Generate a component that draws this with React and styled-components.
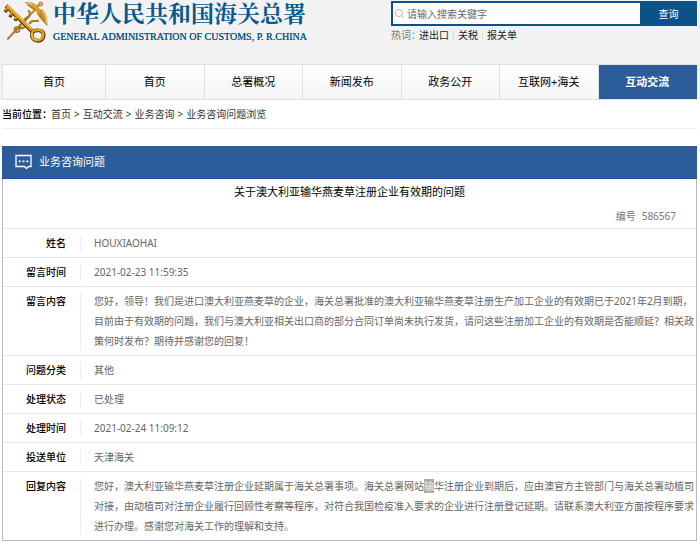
import { Fragment } from "react";
import styled, { createGlobalStyle } from "styled-components";

const GlobalStyle = createGlobalStyle`
  * {
    box-sizing: border-box;
  }

  body {
    margin: 0;
    background: #fff;
    color: #000;
    font-family: "Noto Sans", "Noto Sans CJK SC", sans-serif;
    font-size: 10px;
    line-height: 20px;
  }

  a {
    color: inherit;
    text-decoration: none;
  }
`;

const Header = styled.header`
  padding: 0 3px 0 2px;
  background: #f2f2f2;
`;

const HeaderTop = styled.div`
  display: flex;
  justify-content: space-between;
  align-items: flex-start;
  min-height: 64px;
`;

const Brand = styled.a`
  display: flex;
  gap: 4px;
  color: #07598e;
`;

const BrandText = styled.div`
  white-space: nowrap;
`;

const BrandName = styled.h1`
  margin: 0;
  font-family: "Noto Serif CJK SC", "Noto Sans CJK SC", serif;
  font-size: 23px;
  line-height: 26px;
  font-weight: 700;
`;

const BrandSub = styled.p`
  margin: 0;
  font-family: "Liberation Serif", serif;
  font-size: 10px;
  line-height: 22px;
  font-weight: 400;
  text-shadow: 0 0 0 currentColor;
`;

const SearchArea = styled.div`
  width: 306px;
  padding-top: 1px;
`;

const SearchForm = styled.form`
  display: flex;
  height: 25px;
  border: 1px solid #0b5288;
  border-width: 2px 0 2px 2px;
  background: #0b5288;
`;

const SearchLabel = styled.label`
  flex: 1;
  display: flex;
  align-items: center;
  gap: 2px;
  padding-left: 1px;
  background: #fff;
`;

const SearchInput = styled.input`
  flex: 1;
  min-width: 0;
  padding: 0;
  border: 0;
  outline: 0;
  background: transparent;
  font: inherit;

  &::placeholder {
    color: #666;
    opacity: 1;
  }
`;

const SearchButton = styled.button`
  width: 57px;
  padding: 0;
  border: 0;
  background: #0b5288;
  color: #fff;
  font: inherit;
`;

const HotWords = styled.div`
  display: flex;
  align-items: center;
  line-height: 18px;
  color: #777;
`;

const HotLabel = styled.span`
  width: 24px;
  white-space: nowrap;
`;

const HotLink = styled.a`
  padding: 0 4px;
  line-height: 10px;
  color: #222;

  & + & {
    border-left: 1px solid #ddd;
  }
`;

const Nav = styled.nav`
  display: grid;
  grid-template-columns: 103px repeat(6, 1fr);
  border: 1px solid #e0e0e0;
  border-right: 0;
`;

const NavLink = styled.a`
  border-right: 1px solid ${({ $active }) => ($active ? "#2d5c9a" : "#e0e0e0")};
  background: ${({ $active }) =>
    $active ? "#2d5c9a" : "linear-gradient(#fefefe, #f5f5f5)"};
  color: ${({ $active }) => ($active ? "#fff" : "#000")};
  font-size: 11px;
  line-height: 34px;
  font-weight: ${({ $active }) => ($active ? 700 : 400)};
  text-align: center;
`;

const Main = styled.main`
  padding: 0 3px 0 2px;
`;

const Breadcrumb = styled.div`
  display: flex;
  gap: 3px;
  padding: 4px 0;
  border-bottom: 1px solid #eee;
  color: #333;
`;

const BreadcrumbLabel = styled.span`
  margin-right: -4px;
  color: #000;
  font-weight: 500;
`;

const Panel = styled.section`
  margin-top: 17px;
`;

const PanelHeader = styled.h2`
  display: flex;
  align-items: center;
  gap: 7px;
  margin: 0;
  padding: 0 13px;
  border-bottom: 1px solid #1f4f92;
  background: #2d5c9a;
  color: #fff;
  font-size: 11px;
  line-height: 32px;
  font-weight: 400;
`;

const PanelBody = styled.div`
  border: 1px solid #bbb;
  border-top: 0;
`;

const Title = styled.h3`
  margin: 0;
  padding-top: 2px;
  font-size: 11px;
  line-height: 22px;
  font-weight: 400;
  text-align: center;
`;

const Serial = styled.p`
  display: flex;
  justify-content: flex-end;
  gap: 6px;
  margin: 0;
  padding: 3px 20px 2px;
  color: #777;
`;

const Details = styled.table`
  width: 100%;
  border-collapse: collapse;
`;

const Row = styled.tr`
  border-top: 1px solid #e8e8e8;
`;

const Name = styled.th`
  width: 77px;
  padding: 4px 14px 4px 0;
  font-weight: 500;
  text-align: right;
  vertical-align: top;
  white-space: nowrap;
`;

const Value = styled.td`
  padding: 4px 0 4px 14px;
  background: linear-gradient(#eee, #eee) left center / 1px calc(100% - 11px)
    no-repeat;
  color: #666;
`;

const Highlight = styled.mark`
  background: #ababab;
  color: #eee;
`;

const navItems = [
  "首页",
  "首页",
  "总署概况",
  "新闻发布",
  "政务公开",
  "互联网+海关",
  "互动交流",
];

const crumbs = ["首页", "互动交流", "业务咨询", "业务咨询问题浏览"];

const details = [
  { name: "姓名", value: "HOUXIAOHAI" },
  { name: "留言时间", value: "2021-02-23 11:59:35" },
  {
    name: "留言内容",
    value:
      "您好，领导！我们是进口澳大利亚燕麦草的企业，海关总署批准的澳大利亚输华燕麦草注册生产加工企业的有效期已于2021年2月到期，目前由于有效期的问题，我们与澳大利亚相关出口商的部分合同订单尚未执行发货，请问这些注册加工企业的有效期是否能顺延？相关政策何时发布？期待并感谢您的回复！",
  },
  { name: "问题分类", value: "其他" },
  { name: "处理状态", value: "已处理" },
  { name: "处理时间", value: "2021-02-24 11:09:12" },
  { name: "投送单位", value: "天津海关" },
  {
    name: "回复内容",
    value: (
      <>
        您好，澳大利亚输华燕麦草注册企业延期属于海关总署事项。海关总署网站
        <Highlight>输</Highlight>
        华注册企业到期后，应由澳官方主管部门与海关总署动植司对接，由动植司对注册企业履行回顾性考察等程序，对符合我国检疫准入要求的企业进行注册登记延期。请联系澳大利亚方面按程序要求进行办理。感谢您对海关工作的理解和支持。
      </>
    ),
  },
];

// Golden key crossed with the winged staff
function Emblem() {
  return (
    <svg width="47" height="45" viewBox="0 0 141 135" fill="none" aria-hidden="true">
      <path d="M16 118 L116 10" stroke="#8a5a12" strokeWidth="5" />
      <path d="M16 117 L115 10" stroke="#e3a62c" strokeWidth="2" />
      <path d="M48 84 L116 10" stroke="#d6931a" strokeWidth="6" />
      <path
        d="M40 84 a7 7 0 1 0 10 10 a7 7 0 1 0 -10 -10 M56 72 a7 7 0 1 0 11 8 M68 66 C64 54 76 56 82 48 C88 40 80 36 80 31 M82 72 C90 56 98 68 110 61"
        stroke="#7a4d0c"
        strokeWidth="6"
      />
      <path
        d="M40 84 a7 7 0 1 0 10 10 a7 7 0 1 0 -10 -10 M56 72 a7 7 0 1 0 11 8 M68 66 C64 54 76 56 82 48 C88 40 80 36 80 31 M82 72 C90 56 98 68 110 61"
        stroke="#e8ae34"
        strokeWidth="3"
      />
      <path
        d="M68 6 C84 6 98 8 108 20 L112 30 L101 33 C90 27 78 18 68 6 Z"
        fill="#c98f26"
      />
      <path
        d="M112 30 L120 27 C133 40 138 56 136 79 C126 68 112 56 104 40 Z"
        fill="#c98f26"
      />
      <path
        d="M73 9 C86 11 97 15 104 24 M120 32 C130 43 134 56 133 70"
        stroke="#f3dc9c"
        strokeWidth="3"
      />
      <path
        d="M76 15 L100 31 M112 42 L130 68"
        stroke="#7b6528"
        strokeWidth="2"
      />
      <circle cx="116" cy="12" r="6" fill="#f0b83c" stroke="#8a5a12" strokeWidth="2" />
      <circle cx="109" cy="32" r="7" fill="#e69b1b" />
      <g strokeLinecap="square">
        <path d="M17 22 L92 95" stroke="#5b3506" strokeWidth="13" />
        <path d="M17 24 L12 32 M31 37 L26 47 M46 49 L41 58" stroke="#5b3506" strokeWidth="10" />
        <path d="M17 20 L92 93" stroke="#dc961a" strokeWidth="9" />
        <path d="M16 23 L12 29 M30 36 L26 44 M45 48 L41 55" stroke="#dc961a" strokeWidth="6" />
        <path d="M19 18 L92 89" stroke="#ffd45c" strokeWidth="3" />
      </g>
      <path
        d="M92 94 C101 91 124 87 125 104 C125 119 115 124 105 122 C92 121 86 109 92 94 Z"
        stroke="#5b3506"
        strokeWidth="11"
      />
      <path
        d="M92 93 C101 90 123 86 124 103 C124 117 115 122 105 121 C92 120 86 108 92 93 Z"
        stroke="#e5a323"
        strokeWidth="7"
      />
      <path d="M89 99 C88 109 95 119 105 120" stroke="#ffdf78" strokeWidth="2" />
    </svg>
  );
}

function SearchIcon() {
  return (
    <svg width="11" height="11" viewBox="0 0 11 11" fill="none" stroke="#b5b5b5" aria-hidden="true">
      <circle cx="5" cy="5" r="3.6" />
      <path d="M7.6 7.8 L10 10" />
    </svg>
  );
}

function MessageIcon() {
  return (
    <svg width="17" height="16" viewBox="0 0 17 16" fill="none" stroke="#fff" aria-hidden="true">
      <path d="M1 1.5 H16 V12.5 H13.5 L11.5 14.5 L9.5 12.5 H1 Z" strokeWidth="1.3" />
      <path d="M3.7 7.3 h2 M7.5 7.3 h2 M11.3 7.3 h2" strokeWidth="1.8" />
    </svg>
  );
}

export default function App() {
  return (
    <>
      <GlobalStyle />
      <Header>
        <HeaderTop>
          <Brand href="#">
            <Emblem />
            <BrandText>
              <BrandName>中华人民共和国海关总署</BrandName>
              <BrandSub>GENERAL ADMINISTRATION OF CUSTOMS, P. R.CHINA</BrandSub>
            </BrandText>
          </Brand>
          <SearchArea>
            <SearchForm onSubmit={(e) => e.preventDefault()}>
              <SearchLabel htmlFor="keyword">
                <SearchIcon />
                <SearchInput
                  id="keyword"
                  type="text"
                  placeholder="请输入搜索关键字"
                />
              </SearchLabel>
              <SearchButton type="submit">查询</SearchButton>
            </SearchForm>
            <HotWords>
              <HotLabel>热词：</HotLabel>
              <HotLink href="#">进出口</HotLink>
              <HotLink href="#">关税</HotLink>
              <HotLink href="#">报关单</HotLink>
            </HotWords>
          </SearchArea>
        </HeaderTop>
        <Nav>
          {navItems.map((item, i) => (
            <NavLink key={i} href="#" $active={i === navItems.length - 1}>
              {item}
            </NavLink>
          ))}
        </Nav>
      </Header>
      <Main>
        <Breadcrumb>
          <BreadcrumbLabel>当前位置：</BreadcrumbLabel>
          {crumbs.map((crumb, i) => (
            <Fragment key={crumb}>
              {i > 0 && <span>&gt;</span>}
              <a href="#">{crumb}</a>
            </Fragment>
          ))}
        </Breadcrumb>
        <Panel>
          <PanelHeader>
            <MessageIcon />
            业务咨询问题
          </PanelHeader>
          <PanelBody>
            <Title>关于澳大利亚输华燕麦草注册企业有效期的问题</Title>
            <Serial>
              <span>编号</span>
              <span>586567</span>
            </Serial>
            <Details>
              <tbody>
                {details.map(({ name, value }) => (
                  <Row key={name}>
                    <Name scope="row">{name}</Name>
                    <Value>{value}</Value>
                  </Row>
                ))}
              </tbody>
            </Details>
          </PanelBody>
        </Panel>
      </Main>
    </>
  );
}
